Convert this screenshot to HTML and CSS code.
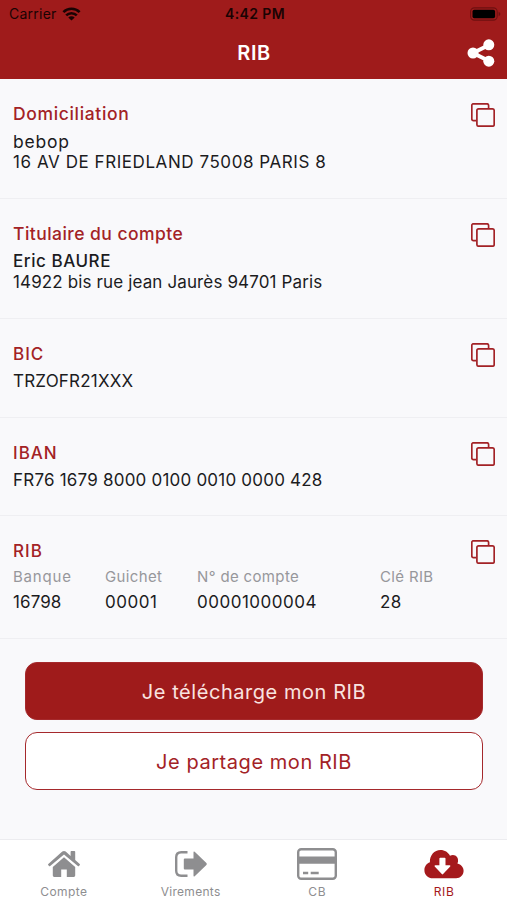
FILE: index.html
```
<!DOCTYPE html>
<html lang="fr">
  <head>
    <meta charset="UTF-8" />
    <meta name="viewport" content="width=device-width, initial-scale=1.0" />
    <title>RIB</title>
    <link rel="stylesheet" href="styles.css">
  </head>
  <body>
    <svg class="defs" aria-hidden="true">
      <symbol id="icon-copy" viewBox="0 0 24 24">
        <path d="M5 17.6H2.4A1.6 1.6 0 0 1 .8 16V2.4A1.6 1.6 0 0 1 2.4 .8H16A1.6 1.6 0 0 1 17.6 2.4V5" />
        <rect x="5.9" y="5.9" width="17.3" height="17.3" rx="1.7" />
      </symbol>
    </svg>

    <header>
      <div class="status">
        <div class="carrier">
          <span>Carrier</span>
          <svg class="wifi" viewBox="0 0 18 14">
            <path d="M.9 5.100a11.500 11.500 0 0 1 16.200 0M3.700 8.400a7.500 7.500 0 0 1 10.600 0" />
            <path class="dot" d="M9 13.600L5.800 10.500a4.600 4.600 0 0 1 6.400 0z" />
          </svg>
        </div>
        <span class="time">4:42 PM</span>
        <svg class="battery" viewBox="0 0 31 14">
          <rect class="shell" x=".6" y=".9" width="26.6" height="12.2" rx="3.8" />
          <rect x="2.5" y="2.8" width="22.6" height="8.4" rx="1.8" />
          <path class="tip" d="M28.6 4.8q1.8 .7 1.8 2.2t-1.8 2.2z" />
        </svg>
      </div>
      <div class="navbar">
        <h1>RIB</h1>
        <svg class="share" viewBox="0 0 28 28">
          <path d="M22 6L6 14l16 8" />
          <circle cx="21.8" cy="5.8" r="5.5" />
          <circle cx="6" cy="14" r="5.5" />
          <circle cx="21.8" cy="22.2" r="5.5" />
        </svg>
      </div>
    </header>

    <main>
      <section class="block">
        <div>
          <h2 class="label-dom">Domiciliation</h2>
          <p class="bank">bebop</p>
          <p class="bank-address">16 AV DE FRIEDLAND 75008 PARIS 8</p>
        </div>
        <svg class="copy"><use href="#icon-copy" /></svg>
      </section>

      <section class="block">
        <div>
          <h2 class="label-owner">Titulaire du compte</h2>
          <p class="owner">Eric BAURE</p>
          <p class="owner-address">14922 bis rue jean Jaurès 94701 Paris</p>
        </div>
        <svg class="copy"><use href="#icon-copy" /></svg>
      </section>

      <section class="block short">
        <div>
          <h2>BIC</h2>
          <p class="bic">TRZOFR21XXX</p>
        </div>
        <svg class="copy"><use href="#icon-copy" /></svg>
      </section>

      <section class="block short">
        <div>
          <h2>IBAN</h2>
          <p class="iban">FR76 1679 8000 0100 0010 0000 428</p>
        </div>
        <svg class="copy"><use href="#icon-copy" /></svg>
      </section>

      <section class="block">
        <div>
          <h2 class="label-rib">RIB</h2>
          <dl class="details">
            <div><dt class="wide">Banque</dt><dd class="code">16798</dd></div>
            <div><dt>Guichet</dt><dd>00001</dd></div>
            <div><dt>N° de compte</dt><dd>00001000004</dd></div>
            <div><dt>Clé RIB</dt><dd>28</dd></div>
          </dl>
        </div>
        <svg class="copy"><use href="#icon-copy" /></svg>
      </section>

      <div class="actions">
        <button class="btn primary">Je télécharge mon RIB</button>
        <button class="btn">Je partage mon RIB</button>
      </div>
    </main>

    <nav class="tabs">
      <a class="tab">
        <svg width="34" height="28" viewBox="0 0 34 28">
          <path d="M17 7.2L28.2 17v8.6q0 1.4-1.4 1.4H19.8v-7.6h-5.6V27H7.2q-1.4 0-1.4-1.4V17z" />
          <path d="M15.3 1.600q1.700-1.400 3.400 0L23.600 5.900V1.800q0-.8.8-.8h3q.8 0 .8.8v8.100l4.500 4q.6.600.1 1.200l-.8.9q-.6.500-1.200 0L17 4.500 3.200 16q-.6.500-1.200 0l-.8-.9q-.5-.6.100-1.200z" />
        </svg>
        <span>Compte</span>
      </a>
      <a class="tab">
        <svg width="34" height="28" viewBox="0 0 34 28">
          <path class="line" d="M13.5 2.200H7.200Q2.200 2.200 2.200 7.200V20.800Q2.200 25.800 7.200 25.800H13.500" />
          <path d="M10.800 8.600h8.700V2.400q0-1.600 1.200-.6L32.400 13q.9 1 0 2L20.700 26.200q-1.200 1-1.200-.6v-6.200h-8.700q-1 0-1-1V9.600q0-1 1-1z" />
        </svg>
        <span class="transfers">Virements</span>
      </a>
      <a class="tab">
        <svg width="40" height="32" viewBox="0 0 40 32">
          <rect class="card" x="1.2" y="1.2" width="37.6" height="29.6" rx="3" />
          <path d="M1 8.500h38v7.300H1zM6 23.700h5.200v2.500H6zM13.700 23.700h8v2.500h-8z" />
        </svg>
        <span class="card-label">CB</span>
      </a>
      <a class="tab active">
        <svg width="40" height="30" viewBox="0 0 40 30">
          <path fill-rule="evenodd" d="M9 29.300C4 29.300.4 25.700.4 21.200c0-3.600 2.200-6.600 5.500-7.900C5.500 6.300 10.300.9 16.500.9c4.300 0 7.700 2.300 9.500 5.900 4.200-2.500 8.900.9 8 5.700-.1.700-.3 1.300-.6 1.900 3.700.9 6.200 3.800 6.200 7.400 0 4.200-3.300 7.500-7.500 7.500zM16.200 8.700q-.8 0-.8.800v6.800h-4.200q-1.200.2-.5 1.100l7.100 7.700q.7.600 1.300 0l7.100-7.700q.7-.9-.5-1.100h-4.200V9.500q0-.8-.8-.8z" />
        </svg>
        <span class="card-label">RIB</span>
      </a>
    </nav>
  </body>
</html>
```
FILE: styles.css
```
* {
  box-sizing: border-box;
}

body {
  margin: 0;
  height: 900px;
  display: flex;
  flex-direction: column;
  background-color: #f9f9fb;
  color: #1c1c1e;
  font-family: "Inter", sans-serif;
}

h1,
h2,
p,
dl,
dd {
  margin: 0;
}

.defs {
  display: none;
}

header {
  height: 79px;
  background-color: #9f1b1b;
}

.status {
  display: grid;
  grid-template-columns: 1fr auto 1fr;
  align-items: center;
  height: 27px;
  padding: 0 6px 0 9px;
  color: #1a0303;
  font-size: 14px;
  letter-spacing: 0.25px;
}

.carrier {
  display: flex;
  align-items: center;
  gap: 5px;
}

.wifi {
  width: 19px;
  height: 14px;
  fill: none;
  stroke: #1a0303;
  stroke-width: 2.6;
}

.wifi .dot {
  fill: #1a0303;
  stroke: none;
}

.time {
  font-weight: 600;
  letter-spacing: 0.4px;
}

.battery {
  width: 31px;
  height: 14px;
  justify-self: end;
  fill: #000;
}

.battery .shell {
  fill: none;
  stroke: #6e1010;
  stroke-width: 1.1;
}

.battery .tip {
  fill: #6e1010;
}

.navbar {
  display: grid;
  grid-template-columns: 1fr auto 1fr;
  align-items: center;
  height: 51px;
  padding: 0 12px 0 13px;
}

.navbar h1 {
  grid-column: 2;
  color: #fff;
  font-size: 20px;
  font-weight: 600;
  letter-spacing: 0.5px;
}

.share {
  width: 28px;
  height: 28px;
  justify-self: end;
  fill: #fff;
}

.share path {
  fill: none;
  stroke: #fff;
  stroke-width: 4;
}

main {
  flex: 1;
}

.block {
  display: flex;
  justify-content: space-between;
  height: 120px;
  padding: 25px 12px 0 13px;
  border-bottom: 1px solid #efeff2;
}

.block.short {
  height: 98.5px;
}

.block:nth-of-type(5) {
  height: 123px;
}

.block h2 {
  margin-bottom: 7px;
  color: #a32226;
  font-size: 17px;
  font-weight: 500;
  line-height: 20px;
  letter-spacing: 1px;
}

.block p {
  font-size: 17px;
  line-height: 21px;
  letter-spacing: 0.56px;
}

.block h2.label-dom {
  font-size: 17.5px;
  letter-spacing: 0.66px;
}

.block h2.label-owner {
  font-size: 17.5px;
  letter-spacing: 0.46px;
}

.block h2.label-rib {
  margin-bottom: 5px;
}

.block p.bank {
  font-size: 17.5px;
  letter-spacing: 0.75px;
}

.block p.owner {
  font-weight: 500;
}

.block p.owner-address {
  letter-spacing: 0.13px;
}

.block p.bic,
.block p.iban {
  letter-spacing: 0.21px;
}

.copy {
  width: 24px;
  height: 24px;
  margin-top: -1px;
  fill: none;
  stroke: #a32226;
  stroke-width: 1.7;
}

.details {
  display: grid;
  grid-template-columns: 92px 92px 183px auto;
}

.details dt {
  color: #97979b;
  font-size: 15px;
  line-height: 21px;
  letter-spacing: 0.35px;
}

.details dt.wide {
  letter-spacing: 0.8px;
}

.details dd {
  margin-top: 5px;
  font-size: 17px;
  line-height: 21px;
  letter-spacing: 0.5px;
}

.details dd.code {
  letter-spacing: 0.1px;
}

.actions {
  display: flex;
  flex-direction: column;
  gap: 12px;
  padding: 23px 24px 0 25px;
}

.btn {
  height: 58px;
  border: 1.5px solid #a5292c;
  border-radius: 12px;
  background-color: #fff;
  color: #a32226;
  font-family: inherit;
  font-size: 20px;
  line-height: 26px;
  padding-top: 3px;
  letter-spacing: 0.55px;
}

.btn.primary {
  background-color: #9f1b1b;
  color: #f9e3e0;
}

.tabs {
  display: grid;
  grid-template-columns: repeat(4, 1fr);
  height: 61px;
  border-top: 1px solid #ececef;
  background-color: #fff;
}

.tab {
  display: grid;
  grid-template-rows: 47px auto;
  justify-items: center;
  align-items: center;
  align-content: start;
  padding-left: 1px;
  color: #8e8e90;
  fill: #8e8e90;
  font-size: 12px;
  line-height: 9px;
  letter-spacing: 0.4px;
}

.tab .line,
.tab .card {
  fill: none;
  stroke: #8e8e90;
  stroke-width: 2.4;
}

.transfers {
  letter-spacing: 0.3px;
}

.card-label {
  letter-spacing: 0.7px;
}

.tab.active {
  color: #a5191c;
  fill: #a5191c;
}
```
